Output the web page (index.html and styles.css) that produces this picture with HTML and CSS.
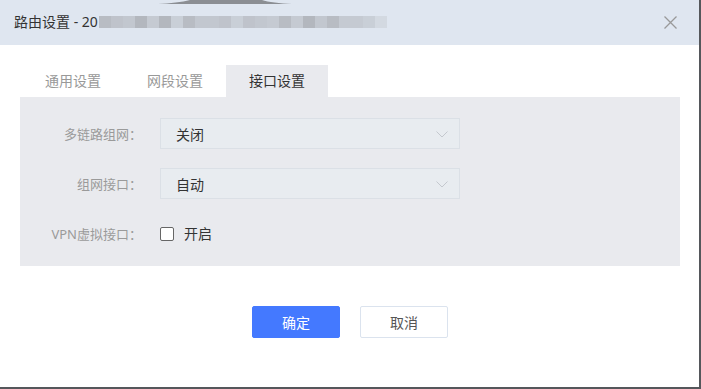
FILE: index.html
```html
<!DOCTYPE html>
<html lang="zh-CN">
<head>
<meta charset="utf-8">
<title>路由设置</title>
<link rel="stylesheet" href="styles.css">
</head>
<body>
<div class="dialog">
  <header class="head">
    <svg class="notch" width="140" height="5" viewBox="0 0 140 5"><path d="M0 4 C12 3.5 24 2 32 0 L104 0 C110 2 122 3.5 134 4 Z" fill="#8b8e93"/></svg>
    <div class="title">
      <span class="title-text">路由设置 - 20</span>
      <span class="redact">
        <i class="a"></i><i class="b"></i><i class="c"></i><i class="d"></i><i class="e"></i><i class="d"></i><i class="f"></i><i class="a"></i><i class="c"></i><i class="c"></i><i class="b"></i><i class="f"></i><i class="b"></i><i class="c"></i><i class="e"></i><i class="a"></i><i class="e"></i><i class="d"></i><i class="c"></i><i class="a"></i><i class="e"></i><i class="e"></i><i class="f"></i><i class="g"></i>
      </span>
    </div>
    <svg class="close" width="13" height="13" viewBox="0 0 13 13"><path d="M0.5 0.5 L12.5 12.5 M12.5 0.5 L0.5 12.5" stroke="#999" stroke-width="1.3" fill="none"/></svg>
  </header>

  <main class="body">
    <nav class="tabs">
      <div class="tab">通用设置</div>
      <div class="tab">网段设置</div>
      <div class="tab active">接口设置</div>
    </nav>
    <section class="panel">
      <div class="row">
        <label class="label">多链路组网：</label>
        <div class="select">
          <span>关闭</span>
          <svg class="chev" width="12" height="7" viewBox="0 0 12 7"><path d="M0.5 0.5 L6 6 L11.5 0.5" stroke="#c4c8ce" stroke-width="1" fill="none"/></svg>
        </div>
      </div>
      <div class="row">
        <label class="label">组网接口：</label>
        <div class="select">
          <span>自动</span>
          <svg class="chev" width="12" height="7" viewBox="0 0 12 7"><path d="M0.5 0.5 L6 6 L11.5 0.5" stroke="#c4c8ce" stroke-width="1" fill="none"/></svg>
        </div>
      </div>
      <div class="row">
        <label class="label">VPN虚拟接口：</label>
        <div class="check">
          <span class="box"></span>
          <span>开启</span>
        </div>
      </div>
    </section>
  </main>

  <footer class="foot">
    <button class="btn primary">确定</button>
    <button class="btn">取消</button>
  </footer>
</div>
</body>
</html>
```

FILE: styles.css
```css
* { box-sizing: border-box; }
html, body { margin: 0; padding: 0; }
body {
  width: 701px;
  height: 389px;
  overflow: hidden;
  background: #fff;
  font-family: "Noto Sans", "Noto Sans CJK SC", sans-serif;
}
.dialog {
  width: 701px;
  height: 389px;
  border-right: 2px solid #55575b;
  border-bottom: 2px solid #55575b;
  display: flex;
  flex-direction: column;
  background: #fff;
}
.head {
  position: relative;
  height: 45px;
  flex: none;
  background: #dfe6f0;
  display: flex;
  align-items: center;
  justify-content: space-between;
  padding: 0 22px 0 14px;
}
.notch {
  position: absolute;
  left: 158px;
  top: 0;
}
.title {
  display: flex;
  align-items: center;
  margin-top: -1px;
}
.title-text {
  font-size: 14px;
  line-height: 20px;
  color: #333;
  font-family: "Noto Sans", "Noto Sans CJK SC", sans-serif;
}
.redact {
  display: flex;
  margin-left: 1px;
  height: 12px;
}
.redact i { display: block; width: 12px; height: 12px; }
.redact .a { background: #b8bcc3; }
.redact .b { background: #bfc3cb; }
.redact .c { background: #c2c7cf; }
.redact .d { background: #b3b7be; }
.redact .e { background: #c5cad2; }
.redact .f { background: #c9cfd7; }
.redact .g { background: #d3d9e1; }
.close { display: block; margin-top: -1px; }

.body {
  flex: 1;
  padding: 20px 19px 0 20px;
}
.tabs {
  display: flex;
  height: 32px;
  padding-left: 2px;
}
.tab {
  padding: 0 23px;
  font-size: 14px;
  line-height: 32px;
  color: #999;
}
.tab.active {
  background: #e9eaee;
  color: #333;
}
.panel {
  background: #e9eaee;
  height: 169px;
  padding: 21px 0 0 0;
  display: flex;
  flex-direction: column;
  gap: 19px;
}
.row {
  display: flex;
  align-items: center;
  height: 31px;
}
.label {
  width: 122px;
  margin-right: 18px;
  text-align: right;
  font-size: 13px;
  color: #9a9a9a;
  line-height: 20px;
}
.select {
  width: 300px;
  height: 31px;
  background: #e8ecf0;
  border: 1px solid #dbe0e6;
  display: flex;
  align-items: center;
  justify-content: space-between;
  padding: 0 11px 0 15px;
  font-size: 14px;
  color: #333;
}
.chev { display: block; margin-top: 1px; }
.check {
  display: flex;
  align-items: center;
  font-size: 14px;
  color: #333;
  line-height: 20px;
}
.box {
  width: 14px;
  height: 14px;
  border: 1px solid #666;
  background: #fff;
  border-radius: 2px;
  margin-right: 10px;
  margin-top: 1px;
}
.foot {
  height: 123px;
  flex: none;
  display: flex;
  justify-content: center;
  gap: 20px;
  padding-top: 40px;
  padding-left: 1px;
}
.btn {
  width: 88px;
  height: 32px;
  border: 1px solid #dbe3ee;
  background: #fff;
  border-radius: 2px;
  font-family: "Noto Sans CJK SC", sans-serif;
  font-size: 14px;
  color: #555;
  padding: 0;
  cursor: pointer;
}
.btn.primary {
  background: #4479ff;
  border-color: #4479ff;
  color: #fff;
}
```
